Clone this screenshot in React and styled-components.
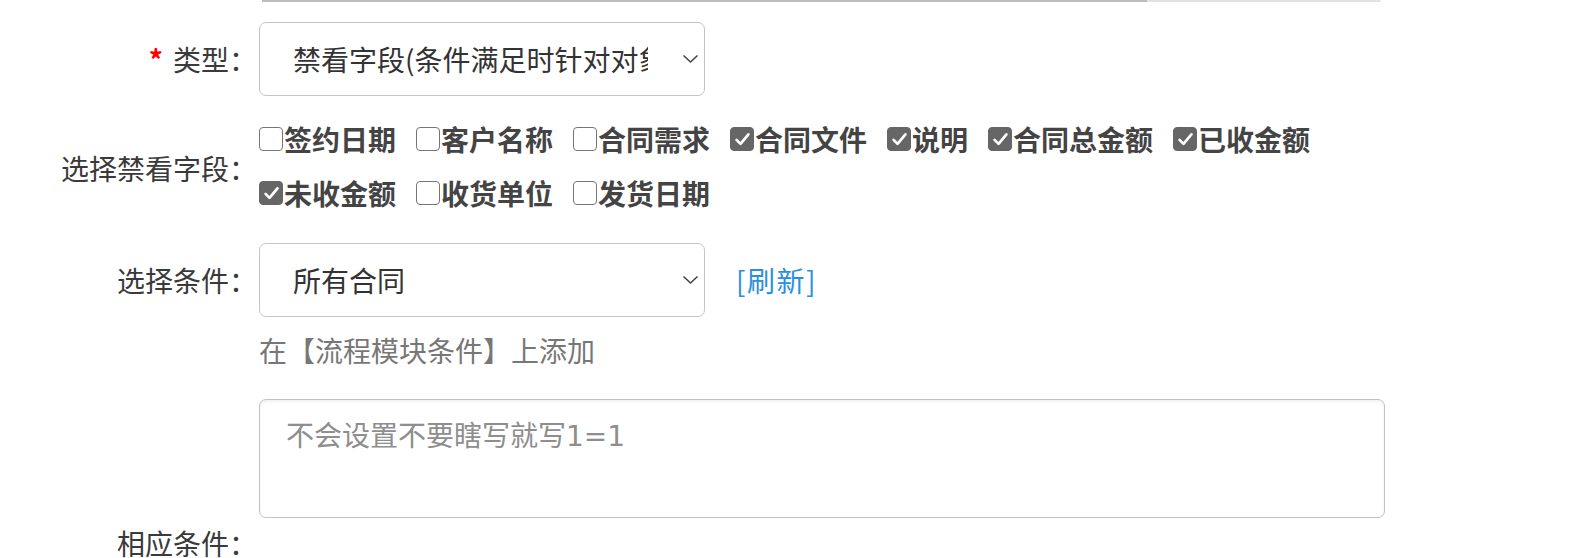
import React from "react";
import styled, { createGlobalStyle } from "styled-components";

const fields = [
  { name: "签约日期", checked: false },
  { name: "客户名称", checked: false },
  { name: "合同需求", checked: false },
  { name: "合同文件", checked: true },
  { name: "说明", checked: true },
  { name: "合同总金额", checked: true },
  { name: "已收金额", checked: true },
  { name: "未收金额", checked: true },
  { name: "收货单位", checked: false },
  { name: "发货日期", checked: false },
];

function Chevron() {
  return (
    <svg width="17" height="10" viewBox="0 0 17 10" fill="none">
      <path d="M1.5 1.5L8.5 8L15.5 1.5" stroke="#444" strokeWidth="1.6" />
    </svg>
  );
}

function CheckMark() {
  return (
    <svg width="19" height="19" viewBox="0 0 24 24" fill="none">
      <path
        d="M4.5 12.5L9.5 17.5L19.5 5.5"
        stroke="#fff"
        strokeWidth="3.4"
        strokeLinecap="round"
        strokeLinejoin="round"
      />
    </svg>
  );
}

function App() {
  return (
    <>
      <GlobalStyle />
      <Page>
        <PrevFieldEdge />

        <Row $top={20}>
          <Label>
            <Required>*</Required>类型：
          </Label>
          <SelectWrap>
            <Select defaultValue="hide">
              <option value="hide">禁看字段(条件满足时针对对象</option>
            </Select>
            <Arrow>
              <Chevron />
            </Arrow>
          </SelectWrap>
        </Row>

        <Row $top={16}>
          <Label $shift={4}>选择禁看字段：</Label>
          <FieldList>
            {fields.map((f) => (
              <FieldItem key={f.name}>
                <Box $checked={f.checked}>{f.checked && <CheckMark />}</Box>
                {f.name}
              </FieldItem>
            ))}
          </FieldList>
        </Row>

        <Row $top={23}>
          <Label>选择条件：</Label>
          <Inline>
            <SelectWrap>
              <Select defaultValue="all">
                <option value="all">所有合同</option>
              </Select>
              <Arrow>
                <Chevron />
              </Arrow>
            </SelectWrap>
            <Refresh href="#">[刷新]</Refresh>
          </Inline>
        </Row>

        <Row $top={12}>
          <span />
          <Hint>在【流程模块条件】上添加</Hint>
        </Row>

        <Row $top={28} $end>
          <Label $tight>相应条件：</Label>
          <Area placeholder="不会设置不要瞎写就写1=1" />
        </Row>
      </Page>
    </>
  );
}

export default App;

const GlobalStyle = createGlobalStyle`
  html, body {
    margin: 0;
    padding: 0;
    background: #fff;
  }
  body {
    font-family: "Noto Sans CJK SC", "Noto Sans", sans-serif;
    font-size: 28px;
    color: #333;
    overflow: hidden;
  }
`;

const Page = styled.div`
  width: 1574px;
  height: 558px;
  overflow: hidden;
`;

const PrevFieldEdge = styled.div`
  margin-left: 262px;
  width: 1119px;
  height: 2px;
  border-radius: 0 0 4px 0;
  background: linear-gradient(to right, #bcbcbc 0 885px, #e2e2e2 885px);
`;

const Row = styled.div`
  display: grid;
  grid-template-columns: 257px 1fr;
  column-gap: 2px;
  align-items: ${(p) => (p.$end ? "end" : "center")};
  margin-top: ${(p) => p.$top}px;
`;

const Label = styled.label`
  text-align: right;
  color: #3a3a3a;
  line-height: ${(p) => (p.$tight ? "30px" : "42px")};
  white-space: nowrap;
  padding-top: ${(p) => p.$shift || 0}px;
`;

const Required = styled.span`
  color: #f00;
  font-weight: bold;
  margin-right: 10px;
`;

const Inline = styled.div`
  display: flex;
  align-items: center;
`;

const SelectWrap = styled.div`
  position: relative;
  width: 446px;
  height: 74px;
`;

const Select = styled.select`
  appearance: none;
  -webkit-appearance: none;
  width: 100%;
  height: 100%;
  box-sizing: border-box;
  border: 1.5px solid #c4c4c4;
  border-radius: 7px;
  background: #fff;
  padding: 0 56px 0 33px;
  font-family: inherit;
  font-size: 28px;
  color: #333;
  outline: none;
`;

const Arrow = styled.span`
  position: absolute;
  right: 6px;
  top: 32px;
  display: flex;
  pointer-events: none;
`;

const Refresh = styled.a`
  margin-left: 31px;
  color: #2b8fdf;
  text-decoration: none;
  letter-spacing: 1.5px;
`;

const FieldList = styled.div`
  display: flex;
  flex-wrap: wrap;
  width: 1110px;
  line-height: 54px;
`;

const FieldItem = styled.label`
  display: inline-flex;
  align-items: center;
  flex-shrink: 0;
  margin-right: 20px;
  font-weight: bold;
  color: #444;
`;

const Box = styled.span`
  box-sizing: border-box;
  flex-shrink: 0;
  width: 24px;
  height: 24px;
  margin-right: 1px;
  border-radius: 4px;
  display: inline-flex;
  align-items: center;
  justify-content: center;
  background: ${(p) => (p.$checked ? "#666" : "#fff")};
  border: 1.5px solid ${(p) => (p.$checked ? "#666" : "#767676")};
`;

const Hint = styled.div`
  color: #777;
  line-height: 42px;
`;

const Area = styled.textarea`
  box-sizing: border-box;
  width: 1126px;
  height: 119px;
  margin-bottom: 40px;
  border: 1.5px solid #c2c2c2;
  border-radius: 7px;
  box-shadow: inset 0 2px 3px rgba(0, 0, 0, 0.06);
  padding: 16px 26px;
  font-family: "DejaVu Sans", "Noto Sans CJK SC", sans-serif;
  font-size: 28px;
  line-height: 42px;
  color: #333;
  resize: none;
  outline: none;

  &::placeholder {
    color: #8e8e8e;
  }
`;
